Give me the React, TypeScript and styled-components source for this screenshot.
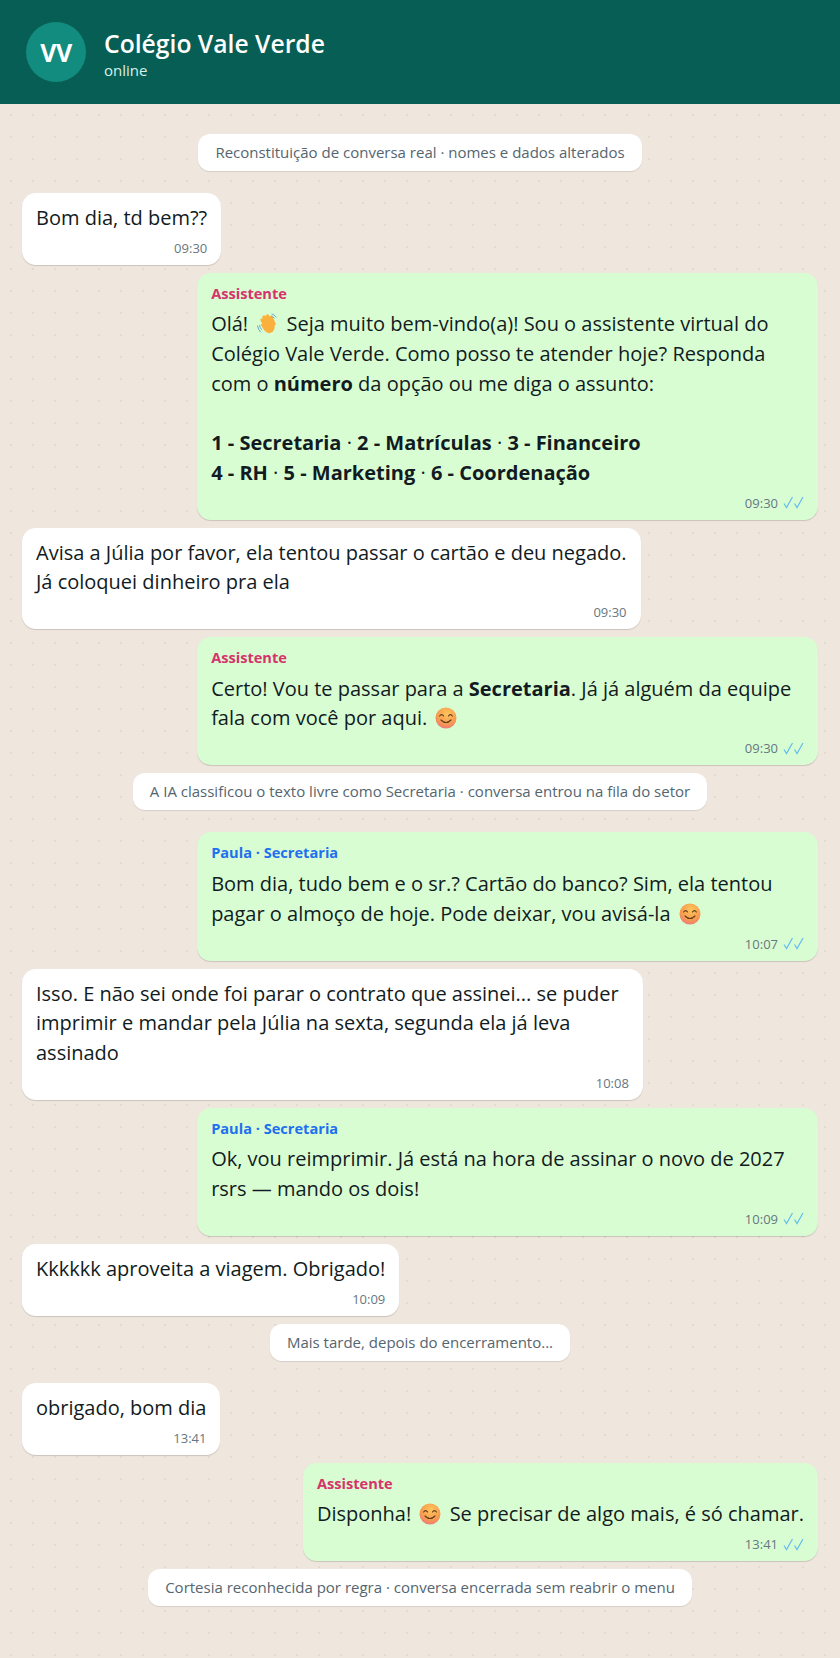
import React from 'react'
import styled, { createGlobalStyle } from 'styled-components'

const GlobalStyle = createGlobalStyle`
  html, body { margin: 0; padding: 0; }
  body {
    background: #efe6dd;
    font-family: "Open Sans", "Noto Sans", sans-serif;
    color: #111b21;
  }
`

const Header = styled.header`
  height: 104px;
  box-sizing: border-box;
  background: #075e54;
  display: flex;
  align-items: center;
  gap: 18px;
  padding: 0 26px;
  color: #fff;
`
const Avatar = styled.div`
  width: 60px;
  height: 60px;
  border-radius: 50%;
  background: #128c7e;
  display: flex;
  align-items: center;
  justify-content: center;
  font-size: 25px;
  font-weight: 700;
  letter-spacing: -0.5px;
`
const HeaderText = styled.div`
  padding-top: 3px;
`
const Title = styled.div`
  font-size: 24.7px;
  font-weight: 600;
  line-height: 32px;
`
const Status = styled.div`
  font-size: 15px;
  line-height: 20px;
  color: #d9f0ea;
`
const Chat = styled.main`
  min-height: 1554px;
  box-sizing: border-box;
  padding: 30px 22px 30px;
  display: flex;
  flex-direction: column;
  gap: 8px;
  background-color: #efe6dd;
  background-image: radial-gradient(circle, #e3dad0 1px, transparent 1.5px);
  background-size: 22px 22px;
`
const Pill = styled.div<{ $last?: boolean }>`
  align-self: center;
  background: #fff;
  border-radius: 12px;
  padding: 8px 17px;
  font-size: 15px;
  line-height: 21px;
  color: #54656f;
  box-shadow: 0 1px 1px rgba(0, 0, 0, 0.1);
  margin: ${(p) => (p.$last ? '0' : '0 0 14px')};
`
const Bubble = styled.div<{ $out?: boolean }>`
  align-self: ${(p) => (p.$out ? 'flex-end' : 'flex-start')};
  max-width: 78%;
  box-sizing: border-box;
  background: ${(p) => (p.$out ? '#d9fdd3' : '#fff')};
  border-radius: 14px;
  padding: 10px 14px 8px;
  box-shadow: 0 1px 1px rgba(0, 0, 0, 0.15);
`
const Sender = styled.div<{ $agent?: boolean }>`
  font-size: 14.6px;
  font-weight: 700;
  line-height: 20px;
  margin-bottom: 6.5px;
  color: ${(p) => (p.$agent ? '#1f70ee' : '#d6336c')};
`
const Text = styled.div`
  font-size: 20px;
  line-height: 29.65px;
  white-space: pre-line;
  b { font-weight: 700; }
`
const Meta = styled.div`
  display: flex;
  justify-content: flex-end;
  align-items: center;
  gap: 5px;
  font-size: 13px;
  line-height: 18px;
  color: #667781;
  margin-top: 6.3px;
`
const EmojiBox = styled.svg`
  display: inline-block;
  width: 22px;
  height: 22px;
  vertical-align: -4px;
  margin: 0 3px;
`

const Smile = () => (
  <EmojiBox viewBox="0 0 22 22">
    <defs>
      <radialGradient id="sm" cx="55%" cy="30%" r="75%">
        <stop offset="0%" stopColor="#fdc55a" />
        <stop offset="65%" stopColor="#f79a50" />
        <stop offset="100%" stopColor="#ea7580" />
      </radialGradient>
    </defs>
    <circle cx="11" cy="11" r="10.5" fill="url(#sm)" />
    <path d="M4.6 9 Q6.6 6.2 8.6 9 M13.4 9 Q15.4 6.2 17.4 9" fill="none" stroke="#5b3a1e" strokeWidth="1.1" strokeLinecap="round" />
    <path d="M6 13 Q11 18 16 13" fill="none" stroke="#5b3a1e" strokeWidth="1.1" strokeLinecap="round" />
  </EmojiBox>
)

const Wave = () => (
  <EmojiBox viewBox="0 0 22 22">
    <path d="M6 7 L11 14 M8 4 L14 12 M11.5 3 L16 11 M15 4.5 L18 11" stroke="#fbb03b" strokeWidth="3.4" strokeLinecap="round" />
    <path d="M7 10 L12 8 L18 10 Q20 15 16.5 19 Q11.5 22 8 17 L4.5 11.5 Z" fill="#fbb03b" />
    <path d="M1.5 13 Q2 16.5 4.5 19 M3.5 12.5 Q4 15 5.5 16.5 M16 1 Q18.5 1.5 20 4 M15.5 3 Q17 3.5 18 5" fill="none" stroke="#6aa6cf" strokeWidth="1" strokeLinecap="round" />
  </EmojiBox>
)

const TicksBox = styled.svg`
  width: 21px;
  height: 13px;
  color: #62bcee;
`
const Ticks = () => (
  <TicksBox viewBox="0 0 21 13">
    <path d="M1 7.5 L3.5 11.5 L9.5 1 M11.5 7.5 L14 11.5 L20 1" fill="none" stroke="currentColor" strokeWidth="1.2" />
  </TicksBox>
)

const Time = ({ at, read }: { at: string; read?: boolean }) => (
  <Meta>
    <span>{at}</span>
    {read && <Ticks />}
  </Meta>
)

export default function App() {
  return (
    <>
      <GlobalStyle />
      <Header>
        <Avatar>VV</Avatar>
        <HeaderText>
          <Title>Colégio Vale Verde</Title>
          <Status>online</Status>
        </HeaderText>
      </Header>
      <Chat>
        <Pill>Reconstituição de conversa real · nomes e dados alterados</Pill>
        <Bubble>
          <Text>Bom dia, td bem??</Text>
          <Time at="09:30" />
        </Bubble>
        <Bubble $out>
          <Sender>Assistente</Sender>
          <Text>
            Olá! <Wave /> Seja muito bem-vindo(a)! Sou o assistente virtual do Colégio Vale Verde. Como posso te atender hoje? Responda com o <b>número</b> da opção ou me diga o assunto:
            {'\n\n'}
            <b>1 - Secretaria</b> · <b>2 - Matrículas</b> · <b>3 - Financeiro</b>
            {'\n'}
            <b>4 - RH</b> · <b>5 - Marketing</b> · <b>6 - Coordenação</b>
          </Text>
          <Time at="09:30" read />
        </Bubble>
        <Bubble>
          <Text>Avisa a Júlia por favor, ela tentou passar o cartão e deu negado.{'\n'}Já coloquei dinheiro pra ela</Text>
          <Time at="09:30" />
        </Bubble>
        <Bubble $out>
          <Sender>Assistente</Sender>
          <Text>
            Certo! Vou te passar para a <b>Secretaria</b>. Já já alguém da equipe fala com você por aqui. <Smile />
          </Text>
          <Time at="09:30" read />
        </Bubble>
        <Pill>A IA classificou o texto livre como Secretaria · conversa entrou na fila do setor</Pill>
        <Bubble $out>
          <Sender $agent>Paula · Secretaria</Sender>
          <Text>
            Bom dia, tudo bem e o sr.? Cartão do banco? Sim, ela tentou pagar o almoço de hoje. Pode deixar, vou avisá-la <Smile />
          </Text>
          <Time at="10:07" read />
        </Bubble>
        <Bubble>
          <Text>Isso. E não sei onde foi parar o contrato que assinei... se puder imprimir e mandar pela Júlia na sexta, segunda ela já leva assinado</Text>
          <Time at="10:08" />
        </Bubble>
        <Bubble $out>
          <Sender $agent>Paula · Secretaria</Sender>
          <Text>Ok, vou reimprimir. Já está na hora de assinar o novo de 2027 rsrs — mando os dois!</Text>
          <Time at="10:09" read />
        </Bubble>
        <Bubble>
          <Text>Kkkkkk aproveita a viagem. Obrigado!</Text>
          <Time at="10:09" />
        </Bubble>
        <Pill>Mais tarde, depois do encerramento...</Pill>
        <Bubble>
          <Text>obrigado, bom dia</Text>
          <Time at="13:41" />
        </Bubble>
        <Bubble $out>
          <Sender>Assistente</Sender>
          <Text>
            Disponha! <Smile /> Se precisar de algo mais, é só chamar.
          </Text>
          <Time at="13:41" read />
        </Bubble>
        <Pill $last>Cortesia reconhecida por regra · conversa encerrada sem reabrir o menu</Pill>
      </Chat>
    </>
  )
}
